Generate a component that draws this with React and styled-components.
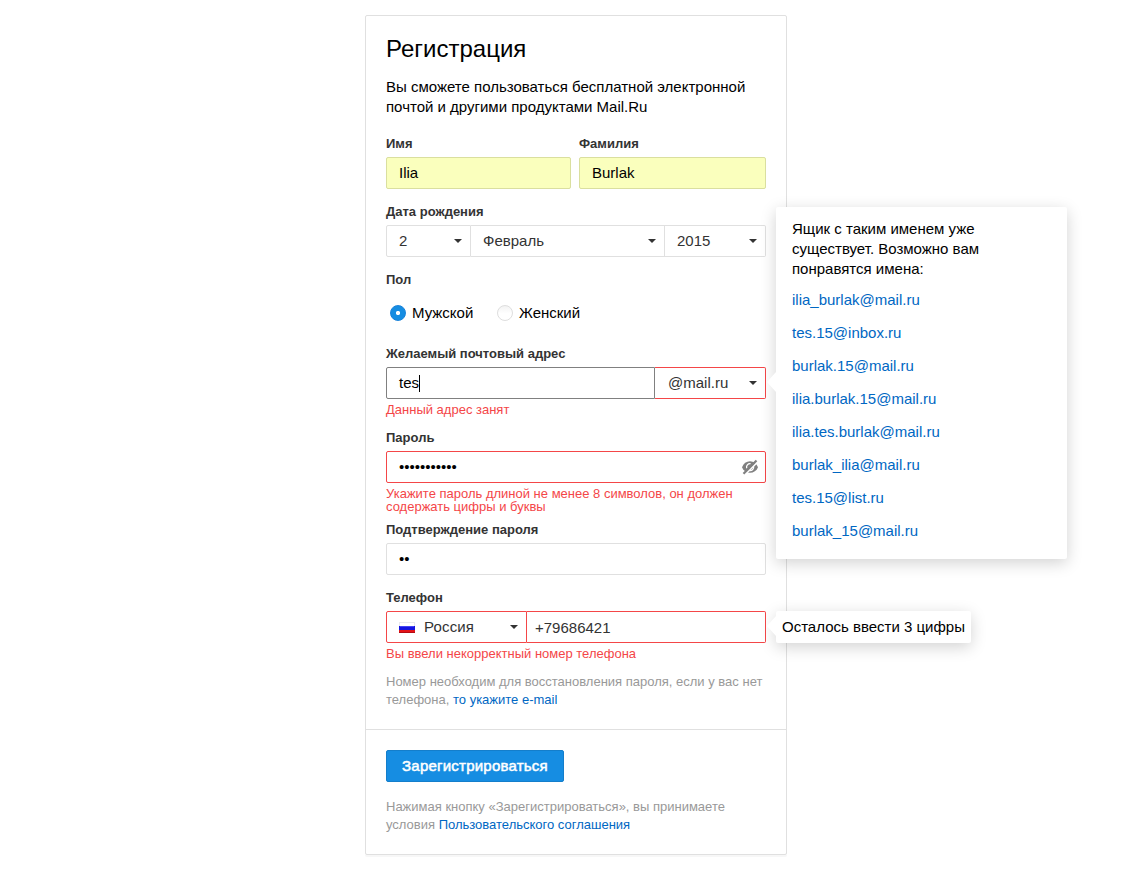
import React from "react";
import styled, { createGlobalStyle, css } from "styled-components";

const GlobalStyle = createGlobalStyle`
  * { box-sizing: border-box; }
  body {
    margin: 0;
    background: #fff;
    color: #000;
    font: 15px/20px "Liberation Sans", Arial, sans-serif;
  }
`;

const RED = "#f44648";
const LINE = "#e0e0e0";

const Page = styled.div`
  min-height: 890px;
  padding: 15px 0 0 365px;
`;

const Card = styled.main`
  width: 422px;
  height: 840px;
  border: 1px solid ${LINE};
  border-radius: 2px;
  box-shadow: 0 2px 0 #f7f7f7;
`;

const FormBody = styled.section`
  height: 713px;
  padding: 20px 20px 0;
`;

const Footer = styled.footer`
  padding: 20px;
  border-top: 1px solid ${LINE};
`;

const Line = styled.span`
  display: block;
  width: max-content;
  white-space: nowrap;
  letter-spacing: ${(p) => p.$track || 0}px;
`;

const Title = styled.h1`
  margin: 0;
  font-size: 24px;
  font-weight: 400;
  line-height: 26px;
`;

const Intro = styled.p`
  margin: 15px 0 19px;
`;

const Columns = styled.div`
  display: grid;
  grid-template-columns: 185px 187px;
  gap: 8px;
`;

const Field = styled.div`
  margin-top: ${(p) => p.$gap || 0}px;
`;

const Label = styled.div`
  height: 16px;
  margin-bottom: 5px;
  color: #333;
  font-size: 13px;
  font-weight: 700;
  line-height: 16px;
`;

const Control = styled.div`
  position: relative;
  display: flex;
`;

const tones = {
  plain: css`border-color: ${LINE};`,
  filled: css`border-color: #dadf9f; background: #faffbd;`,
  error: css`border-color: ${RED};`,
  focus: css`border-color: #808080;`,
};

const Box = styled.div`
  display: flex;
  align-items: center;
  flex: ${(p) => (p.$width ? `0 0 ${p.$width}px` : "1 1 0")};
  height: 32px;
  padding: ${(p) => p.$drop || 0}px ${(p) => p.$end || 8}px 0 ${(p) => p.$pad || 12}px;
  border: 1px solid;
  border-radius: ${(p) => p.$radius || "2px"};
  ${(p) => p.$joined && css`border-left-width: 0;`}
  color: ${(p) => p.$color || "#000"};
  ${(p) => tones[p.$tone || "plain"]}
`;

const Caret = styled.i`
  width: 1px;
  height: 17px;
  background: #000;
`;

const Arrow = styled.i`
  margin-left: auto;
  border: solid transparent;
  border-width: 4px 4px 0;
  border-top-color: #333;
`;

const Flag = styled.svg`
  margin-right: 9px;
`;

const EyeIcon = styled.svg`
  margin-left: auto;
`;

const ErrorText = styled.div`
  height: ${(p) => p.$height || 14}px;
  margin-top: 4px;
  color: ${RED};
  font-size: 13px;
  line-height: 13px;
`;

const Hint = styled.div`
  margin-top: ${(p) => p.$top}px;
  color: #999;
  font-size: 13px;
  line-height: 18px;
`;

const Link = styled.a`
  color: #0067c3;
  text-decoration: none;
`;

const Radios = styled.div`
  display: flex;
  align-items: center;
  height: 40px;
  padding-left: 4px;
`;

const Radio = styled.label`
  display: flex;
  align-items: center;
  width: ${(p) => p.$width}px;
`;

const Dot = styled.i`
  width: 16px;
  height: 16px;
  margin-right: 6px;
  border: 1px solid ${(p) => (p.$on ? "#1782da" : "#dedede")};
  border-radius: 50%;
  background: ${(p) =>
    p.$on
      ? "radial-gradient(circle, #fff 0 1.7px, #168de2 2.5px)"
      : "linear-gradient(#f3f3f3, #fff 55%)"};
`;

const Submit = styled.button`
  display: flex;
  align-items: center;
  justify-content: center;
  width: 178px;
  height: 32px;
  padding: 0;
  border: 1px solid #147ecb;
  border-radius: 2px;
  background: #168de2;
  color: #fff;
  font: 15px/20px "Liberation Sans", Arial, sans-serif;
  -webkit-text-stroke: 0.5px #fff;
`;

const Popover = styled.aside`
  position: absolute;
  z-index: 1;
  left: 390px;
  top: ${(p) => p.$top}px;
  width: ${(p) => p.$width}px;
  height: ${(p) => p.$height}px;
  padding: ${(p) => p.$padding};
  border-radius: 2px;
  background: #fff;
  box-shadow: 0 4px 16px rgba(0, 0, 0, 0.18);

  &::before {
    content: "";
    position: absolute;
    left: -9px;
    top: ${(p) => p.$arrow}px;
    border: solid transparent;
    border-width: 10px 9px 10px 0;
    border-right-color: #fff;
  }
`;

const Suggestions = styled.ul`
  display: grid;
  gap: 13px;
  margin: 11px 0 0;
  padding: 0;
  list-style: none;
`;

const names = [
  "ilia_burlak@mail.ru",
  "tes.15@inbox.ru",
  "burlak.15@mail.ru",
  "ilia.burlak.15@mail.ru",
  "ilia.tes.burlak@mail.ru",
  "burlak_ilia@mail.ru",
  "tes.15@list.ru",
  "burlak_15@mail.ru",
];

function HiddenEye() {
  return (
    <EyeIcon width="16" height="16" viewBox="0 0 16 16" fill="none">
      <path d="M0 8.2C1.4 4.4 4.4 2.3 8 2.3s6.6 2.1 8 5.9c-1.4 3.6-4.4 5.5-8 5.5S1.400 11.800 0 8.200Z" fill="#808080" />
      <path d="M4.700 9.200A3.500 3.500 0 0 1 8.600 4.700M11.500 7.200A3.500 3.500 0 0 1 7.400 11.600" stroke="#fff" strokeWidth="1.300" />
      <path d="M3.200 15.400 16 2.600" stroke="#fff" strokeWidth="1.500" />
      <path d="M1.500 14.700 14.500 1.500" stroke="#808080" strokeWidth="2.200" />
    </EyeIcon>
  );
}

function RussiaFlag() {
  return (
    <Flag width="16" height="11" viewBox="0 0 16 11">
      <path fill="#e8e8ee" d="M0 0h16v4H0z" />
      <path fill="#fff" d="M1 1h14v3H1z" />
      <path fill="#1414e0" d="M0 4h16v4H0z" />
      <path fill="#4444f4" d="M1 4h14v1H1z" />
      <path fill="#e31318" d="M0 8h16v3H0z" />
      <path fill="#b40a12" d="M0 10h16v1H0z" />
    </Flag>
  );
}

export default function App() {
  return (
    <Page>
      <GlobalStyle />
      <Card>
        <FormBody>
          <Title><Line>Регистрация</Line></Title>
          <Intro>
            <Line>Вы сможете пользоваться бесплатной электронной</Line>
            <Line>почтой и другими продуктами Mail.Ru</Line>
          </Intro>

          <Columns>
            <Field>
              <Label><Line>Имя</Line></Label>
              <Control><Box $tone="filled"><Line>Ilia</Line></Box></Control>
            </Field>
            <Field>
              <Label><Line>Фамилия</Line></Label>
              <Control><Box $tone="filled"><Line>Burlak</Line></Box></Control>
            </Field>
          </Columns>

          <Field $gap={15}>
            <Label><Line>Дата рождения</Line></Label>
            <Control>
              <Box $width={85} $color="#333" $radius="2px 0 0 2px"><Line>2</Line><Arrow /></Box>
              <Box $width={194} $color="#333" $joined $radius="0"><Line>Февраль</Line><Arrow /></Box>
              <Box $color="#333" $joined $radius="0 2px 2px 0"><Line>2015</Line><Arrow /></Box>
            </Control>
          </Field>

          <Field $gap={15}>
            <Label><Line>Пол</Line></Label>
            <Radios>
              <Radio $width={107}><Dot $on /><Line>Мужской</Line></Radio>
              <Radio $width={90}><Dot /><Line>Женский</Line></Radio>
            </Radios>
          </Field>

          <Field $gap={13}>
            <Label><Line>Желаемый почтовый адрес</Line></Label>
            <Control>
              <Box $width={269} $tone="focus" $radius="2px 0 0 2px"><Line>tes</Line><Caret /></Box>
              <Box $tone="error" $joined $pad={13} $color="#333" $radius="0 2px 2px 0"><Line>@mail.ru</Line><Arrow /></Box>
              <Popover $top={-160} $width={291} $height={352} $padding="12px 16px" $arrow={165}>
                <Line>Ящик с таким именем уже</Line>
                <Line>существует. Возможно вам</Line>
                <Line>понравятся имена:</Line>
                <Suggestions>
                  {names.map((name) => (
                    <li key={name}><Link><Line>{name}</Line></Link></li>
                  ))}
                </Suggestions>
              </Popover>
            </Control>
            <ErrorText><Line>Данный адрес занят</Line></ErrorText>
          </Field>

          <Field $gap={13}>
            <Label><Line>Пароль</Line></Label>
            <Control><Box $tone="error" $end={7}><Line>•••••••••••</Line><HiddenEye /></Box></Control>
            <ErrorText $height={27}>
              <Line>Укажите пароль длиной не менее 8 символов, он должен</Line>
              <Line>содержать цифры и буквы</Line>
            </ErrorText>
          </Field>

          <Field $gap={8}>
            <Label><Line>Подтверждение пароля</Line></Label>
            <Control><Box><Line>••</Line></Box></Control>
          </Field>

          <Field $gap={15}>
            <Label><Line>Телефон</Line></Label>
            <Control>
              <Box $width={141} $tone="error" $color="#333" $radius="2px 0 0 2px">
                <RussiaFlag /><Line $track={0.15}>Россия</Line><Arrow />
              </Box>
              <Box $tone="error" $joined $pad={8} $drop={2} $color="#333" $radius="0 2px 2px 0"><Line>+79686421</Line></Box>
              <Popover $top={0} $width={195} $height={32} $padding="6px" $arrow={5}>
                <Line>Осталось ввести 3 цифры</Line>
              </Popover>
            </Control>
            <ErrorText><Line>Вы ввели некорректный номер телефона</Line></ErrorText>
            <Hint $top={12}>
              <Line>Номер необходим для восстановления пароля, если у вас нет</Line>
              <Line>телефона, <Link>то укажите e-mail</Link></Line>
            </Hint>
          </Field>
        </FormBody>

        <Footer>
          <Submit type="button"><Line $track={0.22}>Зарегистрироваться</Line></Submit>
          <Hint $top={16}>
            <Line>Нажимая кнопку «Зарегистрироваться», вы принимаете</Line>
            <Line>условия <Link>Пользовательского соглашения</Link></Line>
          </Hint>
        </Footer>
      </Card>
    </Page>
  );
}
